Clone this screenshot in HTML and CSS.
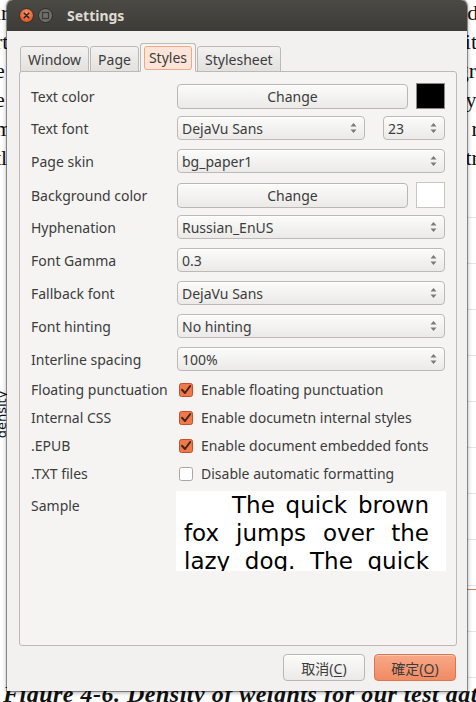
FILE: index.html
```html
<!DOCTYPE html>
<html lang="en">
<head>
  <meta charset="UTF-8">
  <title>Settings</title>
  <link rel="stylesheet" href="styles.css">
</head>
<body>
  <div class="doc">
    <div class="doc-lines">
      <p>ir initial weights are drawn from a narrow band around zero and in</p>
      <p>rt of the network learns slowly at first, since every unit sees or</p>
      <p>e same small signal from the previous layer, and the gradient co</p>
      <p>e back through the stack barely moves the first few layers at all r</p>
      <p>m this we can see why a careful choice of the starting range is vital</p>
      <p>tl plot below shows how those weights spread after a training run</p>
    </div>
    <div class="chart">
      <span class="axis-label">density</span>
      <span class="chart-mark"></span>
    </div>
    <p class="caption">Figure 4-6. Density of weights for our test data set</p>
  </div>

  <div class="window">
    <div class="titlebar">
      <span class="wm-btn wm-close">
        <svg width="15" height="15" viewBox="0 0 15 15">
          <defs>
            <radialGradient id="cg" cx="50%" cy="35%" r="60%">
              <stop offset="0" stop-color="#f79a70"/>
              <stop offset="1" stop-color="#df5427"/>
            </radialGradient>
          </defs>
          <circle cx="7.5" cy="7.5" r="7" fill="url(#cg)" stroke="#2e2d2a" stroke-width="1"/>
          <path d="M5.2 5.2 L9.8 9.8 M9.8 5.2 L5.2 9.8" stroke="#3b2217" stroke-width="1.6" stroke-linecap="round"/>
        </svg>
      </span>
      <span class="wm-btn wm-min">
        <svg width="15" height="15" viewBox="0 0 15 15">
          <circle cx="7.5" cy="7.5" r="7" fill="#6f6e69" stroke="#2e2d2a" stroke-width="1"/>
          <rect x="4.5" y="4.5" width="6" height="6" fill="none" stroke="#3a3936" stroke-width="1.2"/>
        </svg>
      </span>
      <span class="title">Settings</span>
    </div>

    <div class="window-body">
      <div class="tabs">
        <span class="tab">Window</span>
        <span class="tab">Page</span>
        <span class="tab active"><span class="tab-focus">Styles</span></span>
        <span class="tab">Stylesheet</span>
      </div>

      <div class="panel">
        <div class="row">
          <span class="label">Text color</span>
          <div class="pair">
            <button class="btn grow">Change</button>
            <span class="swatch black"></span>
          </div>
        </div>
        <div class="row">
          <span class="label">Text font</span>
          <div class="pair wide-gap">
            <div class="combo font-combo"><span>DejaVu Sans</span><svg class="arrows" width="7" height="14" viewBox="0 0 7 14"><path d="M0.5 5.5 L3.5 2 L6.5 5.5 Z M0.5 8.5 L3.5 12 L6.5 8.5 Z"/></svg></div>
            <div class="combo size-combo"><span>23</span><svg class="arrows" width="7" height="14" viewBox="0 0 7 14"><path d="M0.5 5.5 L3.5 2 L6.5 5.5 Z M0.5 8.5 L3.5 12 L6.5 8.5 Z"/></svg></div>
          </div>
        </div>
        <div class="row">
          <span class="label">Page skin</span>
          <div class="combo"><span>bg_paper1</span><svg class="arrows" width="7" height="14" viewBox="0 0 7 14"><path d="M0.5 5.5 L3.5 2 L6.5 5.5 Z M0.5 8.5 L3.5 12 L6.5 8.5 Z"/></svg></div>
        </div>
        <div class="row">
          <span class="label">Background color</span>
          <div class="pair">
            <button class="btn grow">Change</button>
            <span class="swatch white"></span>
          </div>
        </div>
        <div class="row">
          <span class="label">Hyphenation</span>
          <div class="combo"><span>Russian_EnUS</span><svg class="arrows" width="7" height="14" viewBox="0 0 7 14"><path d="M0.5 5.5 L3.5 2 L6.5 5.5 Z M0.5 8.5 L3.5 12 L6.5 8.5 Z"/></svg></div>
        </div>
        <div class="row">
          <span class="label">Font Gamma</span>
          <div class="combo"><span>0.3</span><svg class="arrows" width="7" height="14" viewBox="0 0 7 14"><path d="M0.5 5.5 L3.5 2 L6.5 5.5 Z M0.5 8.5 L3.5 12 L6.5 8.5 Z"/></svg></div>
        </div>
        <div class="row">
          <span class="label">Fallback font</span>
          <div class="combo"><span>DejaVu Sans</span><svg class="arrows" width="7" height="14" viewBox="0 0 7 14"><path d="M0.5 5.5 L3.5 2 L6.5 5.5 Z M0.5 8.5 L3.5 12 L6.5 8.5 Z"/></svg></div>
        </div>
        <div class="row">
          <span class="label">Font hinting</span>
          <div class="combo"><span>No hinting</span><svg class="arrows" width="7" height="14" viewBox="0 0 7 14"><path d="M0.5 5.5 L3.5 2 L6.5 5.5 Z M0.5 8.5 L3.5 12 L6.5 8.5 Z"/></svg></div>
        </div>
        <div class="row">
          <span class="label">Interline spacing</span>
          <div class="combo"><span>100%</span><svg class="arrows" width="7" height="14" viewBox="0 0 7 14"><path d="M0.5 5.5 L3.5 2 L6.5 5.5 Z M0.5 8.5 L3.5 12 L6.5 8.5 Z"/></svg></div>
        </div>

        <div class="row check-row">
          <span class="label">Floating punctuation</span>
          <label class="check"><svg class="box" width="14" height="14" viewBox="0 0 14 14"><rect x="0.5" y="0.5" width="13" height="13" rx="2" class="on"/><path d="M3 6.8 L6 10 L11.2 3" class="tick"/></svg>Enable floating punctuation</label>
        </div>
        <div class="row check-row">
          <span class="label">Internal CSS</span>
          <label class="check"><svg class="box" width="14" height="14" viewBox="0 0 14 14"><rect x="0.5" y="0.5" width="13" height="13" rx="2" class="on"/><path d="M3 6.8 L6 10 L11.2 3" class="tick"/></svg>Enable documetn internal styles</label>
        </div>
        <div class="row check-row">
          <span class="label">.EPUB</span>
          <label class="check"><svg class="box" width="14" height="14" viewBox="0 0 14 14"><rect x="0.5" y="0.5" width="13" height="13" rx="2" class="on"/><path d="M3 6.8 L6 10 L11.2 3" class="tick"/></svg>Enable document embedded fonts</label>
        </div>
        <div class="row check-row">
          <span class="label">.TXT files</span>
          <label class="check"><svg class="box" width="14" height="14" viewBox="0 0 14 14"><rect x="0.5" y="0.5" width="13" height="13" rx="2" class="off"/></svg>Disable automatic formatting</label>
        </div>

        <div class="row sample-row">
          <span class="label">Sample</span>
          <div class="sample">
            <div class="sample-line first">The quick brown</div>
            <div class="sample-line">fox jumps over the</div>
            <div class="sample-line">lazy dog. The quick</div>
            <div class="sample-line">brown fox jumps</div>
          </div>
        </div>
      </div>

      <div class="actions">
        <button class="btn dlg">取消(<u>C</u>)</button>
        <button class="btn dlg ok">確定(<u>O</u>)</button>
      </div>
    </div>
  </div>
</body>
</html>
```

FILE: styles.css
```css
:root {
  --ui-font: "Noto Sans", "Noto Sans CJK JP", sans-serif;
  --text: #3c3c3c;
  --window-bg: #f2f1f0;
  --panel-bg: #f5f4f3;
  --border: #bdbab6;
}

body {
  margin: 0;
  width: 476px;
  height: 702px;
  overflow: hidden;
  position: relative;
  background: #fff;
  font-family: var(--ui-font);
  color: var(--text);
}

/* document behind the dialog */
.doc {
  font-family: "Liberation Serif", serif;
  color: #111;
  overflow: hidden;
}

.doc-lines {
  margin-left: -5px;
  width: 488px;
  margin-top: -2px;
}

.doc-lines p {
  margin: 0;
  font-size: 22px;
  line-height: 29px;
  white-space: nowrap;
  overflow: hidden;
  text-align: justify;
  text-align-last: justify;
}

.chart {
  position: relative;
  height: 510px;
  background: repeating-linear-gradient(to bottom, transparent 0 45px, #e4e4e4 45px 46px) right top / 160px 100% no-repeat;
}

.axis-label {
  position: absolute;
  left: -22px;
  top: 235px;
  font-family: "DejaVu Sans", sans-serif;
  font-size: 13px;
  transform: rotate(-90deg);
}

.chart-mark {
  position: absolute;
  right: 0;
  top: 417px;
  width: 12px;
  height: 1px;
  background: #d08060;
}

.caption {
  margin: 0;
  padding-left: 3px;
  font-size: 24px;
  line-height: 24px;
  letter-spacing: 0.5px;
  font-weight: bold;
  font-style: italic;
  white-space: nowrap;
  overflow: hidden;
}

/* dialog window */
.window {
  position: absolute;
  left: 7px;
  top: 0;
  width: 460px;
  height: 691px;
  display: flex;
  flex-direction: column;
  background: var(--window-bg);
  border-radius: 6px 6px 0 0;
  box-shadow: 0 0 0 1px rgba(0, 0, 0, 0.35), 0 1px 5px rgba(0, 0, 0, 0.45);
  overflow: hidden;
}

.titlebar {
  height: 31px;
  flex: none;
  display: flex;
  align-items: center;
  padding-left: 12px;
  background: linear-gradient(#4b4a45, #3c3b37);
}

.wm-btn {
  display: flex;
  width: 15px;
  height: 15px;
}

.wm-min {
  margin-left: 4px;
}

.title {
  margin-left: 14px;
  font-size: 14px;
  font-weight: bold;
  color: #dfdbd2;
}

.window-body {
  flex: 1;
  display: flex;
  flex-direction: column;
  padding: 12px 10px 10px 12px;
}

/* tabs */
.tabs {
  display: flex;
  align-items: flex-end;
  margin-left: 1px;
  height: 29px;
  margin-bottom: -1px;
  position: relative;
  z-index: 1;
}

.tab {
  height: 26px;
  display: flex;
  align-items: center;
  padding: 0 7px;
  margin-right: 1px;
  font-size: 14px;
  border: 1px solid var(--border);
  border-radius: 3px 3px 0 0;
  background: linear-gradient(#f3f2f1, #e3e1de);
  box-sizing: border-box;
}

.tab.active {
  height: 29px;
  padding: 0 3px;
  background: var(--panel-bg);
  border-bottom-color: var(--panel-bg);
}

.tab-focus {
  padding: 1px 4px 2px;
  border: 1px solid #f1a887;
  border-radius: 3px;
  background: #fce4d9;
}

.panel {
  height: 575px;
  box-sizing: border-box;
  padding: 11px 11px;
  display: flex;
  flex-direction: column;
  gap: 9px;
  background: var(--panel-bg);
  border: 1px solid var(--border);
  border-radius: 3px;
}

.row {
  display: grid;
  grid-template-columns: 146px 268px;
  align-items: center;
  height: 24px;
}

.label {
  font-size: 14px;
  white-space: nowrap;
}

.pair {
  display: flex;
  align-items: center;
  gap: 8px;
  height: 100%;
}

.pair.wide-gap {
  gap: 18px;
}

.btn {
  font-family: var(--ui-font);
  font-size: 14px;
  color: var(--text);
  height: 25px;
  padding: 0;
  border: 1px solid #bab7b3;
  border-radius: 4px;
  background: linear-gradient(#fbfbfa, #ebeae8);
  box-shadow: inset 0 1px 0 #fff;
}

.btn.grow {
  flex: 1;
}

.swatch {
  width: 29px;
  height: 26px;
  flex: none;
  box-sizing: border-box;
  border: 1px solid #c9c6c2;
}

.swatch.black {
  background: #000;
  border-color: #8a8986;
}

.swatch.white {
  background: #fff;
}

.combo {
  height: 24px;
  box-sizing: border-box;
  display: flex;
  align-items: center;
  justify-content: space-between;
  padding: 0 7px 0 4px;
  font-size: 14px;
  border: 1px solid #bdbab6;
  border-radius: 4px;
  background: linear-gradient(#fbfbfa, #ebeae8);
  box-shadow: inset 0 1px 0 #fff;
}

.font-combo {
  width: 188px;
}

.size-combo {
  width: 62px;
}

.arrows path {
  fill: #7a7a78;
}

.check-row {
  height: 19px;
}

.check {
  display: flex;
  align-items: center;
  gap: 8px;
  padding-left: 2px;
  font-size: 14px;
  white-space: nowrap;
}

.box .on {
  fill: #f0784a;
  stroke: #c0522a;
}

.box .off {
  fill: #fff;
  stroke: #a9a6a2;
}

.box .tick {
  fill: none;
  stroke: #43261a;
  stroke-width: 2;
  stroke-linecap: round;
  stroke-linejoin: round;
}

.sample-row {
  height: 80px;
  align-items: start;
  margin-top: -1px;
}

.sample-row .label {
  padding-top: 5px;
}

.sample {
  height: 80px;
  width: 270px;
  box-sizing: border-box;
  padding: 0 17px 0 8px;
  margin-left: -1px;
  overflow: hidden;
  background: #fff;
  font-family: "DejaVu Sans", sans-serif;
  font-size: 23px;
  line-height: 28px;
  color: #000;
}

.sample-line {
  text-align: justify;
  text-align-last: justify;
  white-space: nowrap;
}

.sample-line.first {
  padding-left: 48px;
}

.actions {
  display: flex;
  justify-content: flex-end;
  gap: 9px;
  margin-top: 8px;
  padding-right: 1px;
}

.btn.dlg {
  width: 82px;
  height: 27px;
  font-size: 14px;
}

.btn.dlg u {
  text-underline-offset: 2px;
}

.btn.ok {
  border-color: #d9764f;
  background: linear-gradient(#f8a887, #f08b64);
  box-shadow: inset 0 1px 0 #fbc7b2;
}
```
